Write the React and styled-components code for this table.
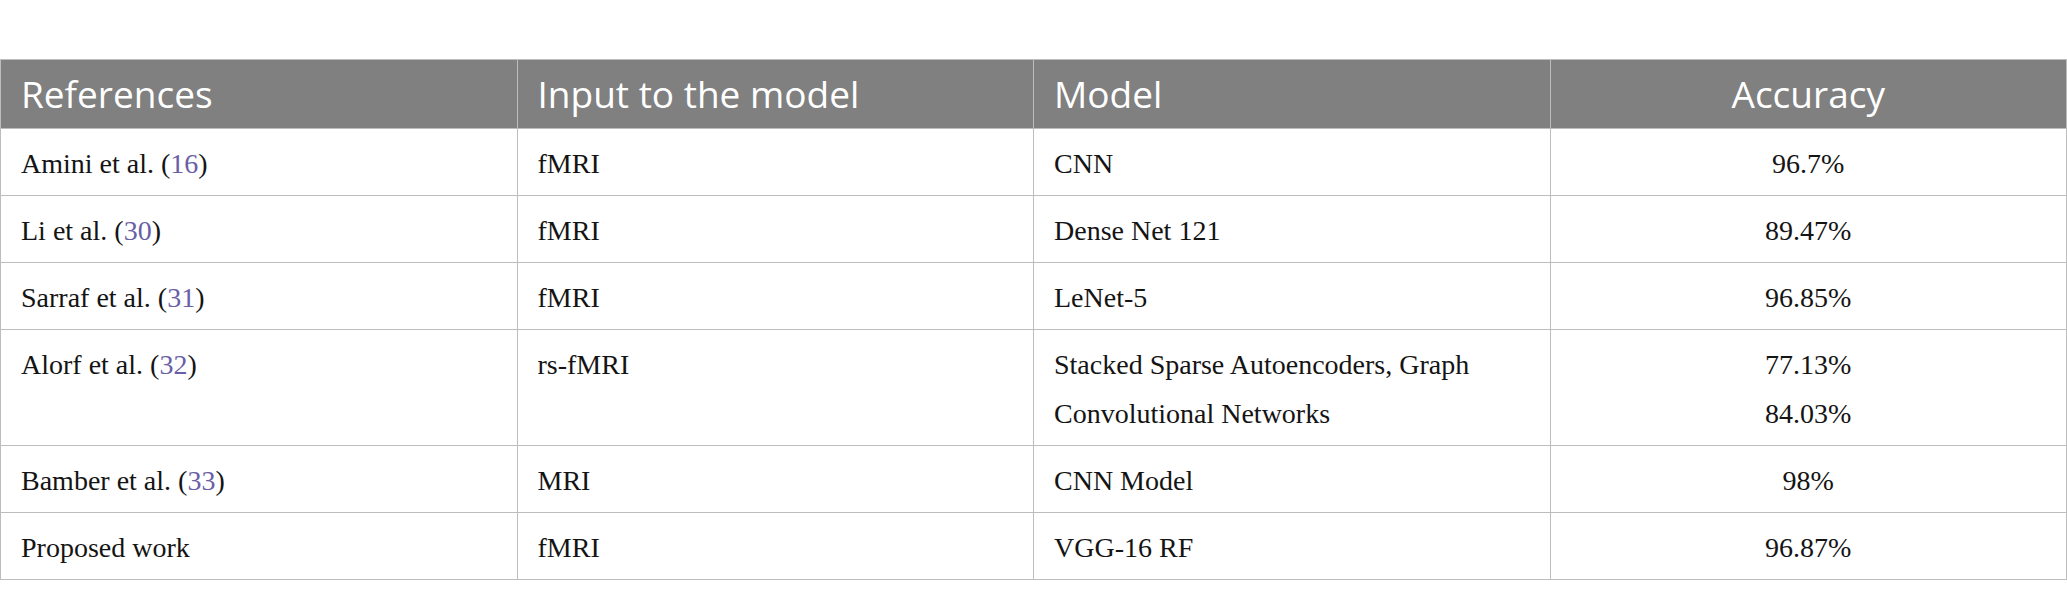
import React from "react";
import styled, { createGlobalStyle } from "styled-components";

const GlobalStyle = createGlobalStyle`
  body {
    margin: 0;
    background: #ffffff;
  }
`;

const rows = [
  { ref: "Amini et al.", cite: "16", input: "fMRI", model: "CNN", acc: ["96.7%"] },
  { ref: "Li et al.", cite: "30", input: "fMRI", model: "Dense Net 121", acc: ["89.47%"] },
  { ref: "Sarraf et al.", cite: "31", input: "fMRI", model: "LeNet-5", acc: ["96.85%"] },
  {
    ref: "Alorf et al.",
    cite: "32",
    input: "rs-fMRI",
    model: "Stacked Sparse Autoencoders, Graph Convolutional Networks",
    acc: ["77.13%", "84.03%"],
  },
  { ref: "Bamber et al.", cite: "33", input: "MRI", model: "CNN Model", acc: ["98%"] },
  { ref: "Proposed work", input: "fMRI", model: "VGG-16 RF", acc: ["96.87%"] },
];

const Page = styled.div`
  padding: 59px 0 19px;
`;

const Table = styled.table`
  width: 100%;
  border-collapse: collapse;
  table-layout: fixed;
`;

const HeadCell = styled.th`
  background: #7f807f;
  color: #ffffff;
  font-family: "Open Sans", "Liberation Sans", sans-serif;
  font-weight: 400;
  font-size: 37px;
  line-height: 49px;
  padding: 9px 20px 10px;
  text-align: ${(p) => (p.center ? "center" : "left")};
  border: 1px solid #bdbdbd;
`;

const Cell = styled.td`
  color: #141414;
  font-family: "Liberation Serif", "Times New Roman", serif;
  font-size: 28px;
  line-height: 49px;
  padding: 10px 20px 7px;
  vertical-align: top;
  text-align: ${(p) => (p.center ? "center" : "left")};
  border: 1px solid #bdbdbd;
`;

const Cite = styled.span`
  color: #6a5fa6;
`;

const Line = styled.div``;

export default function App() {
  return (
    <Page>
      <GlobalStyle />
      <Table>
        <thead>
          <tr>
            <HeadCell>References</HeadCell>
            <HeadCell>Input to the model</HeadCell>
            <HeadCell>Model</HeadCell>
            <HeadCell center>Accuracy</HeadCell>
          </tr>
        </thead>
        <tbody>
          {rows.map((r, i) => (
            <tr key={i}>
              <Cell>
                {r.ref}
                {r.cite && (
                  <>
                    {" "}(<Cite>{r.cite}</Cite>)
                  </>
                )}
              </Cell>
              <Cell>{r.input}</Cell>
              <Cell>{r.model}</Cell>
              <Cell center>
                {r.acc.map((a) => (
                  <Line key={a}>{a}</Line>
                ))}
              </Cell>
            </tr>
          ))}
        </tbody>
      </Table>
    </Page>
  );
}
